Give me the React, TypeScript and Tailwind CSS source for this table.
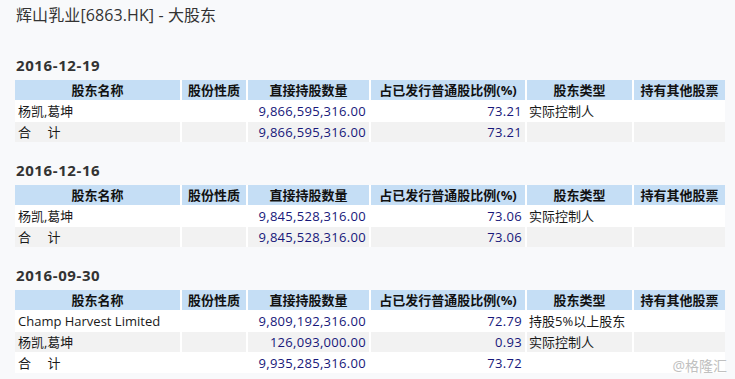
import React from "react";

type Row = { name: string; nature: string; qty: string; pct: string; type: string; other: string };
type Section = { date: string; rows: Row[] };

const sections: Section[] = [
  {
    date: "2016-12-19",
    rows: [
      { name: "杨凯,葛坤", nature: "", qty: "9,866,595,316.00", pct: "73.21", type: "实际控制人", other: "" },
      { name: "合　 计", nature: "", qty: "9,866,595,316.00", pct: "73.21", type: "", other: "" },
    ],
  },
  {
    date: "2016-12-16",
    rows: [
      { name: "杨凯,葛坤", nature: "", qty: "9,845,528,316.00", pct: "73.06", type: "实际控制人", other: "" },
      { name: "合　 计", nature: "", qty: "9,845,528,316.00", pct: "73.06", type: "", other: "" },
    ],
  },
  {
    date: "2016-09-30",
    rows: [
      { name: "Champ Harvest Limited", nature: "", qty: "9,809,192,316.00", pct: "72.79", type: "持股5%以上股东", other: "" },
      { name: "杨凯,葛坤", nature: "", qty: "126,093,000.00", pct: "0.93", type: "实际控制人", other: "" },
      { name: "合　 计", nature: "", qty: "9,935,285,316.00", pct: "73.72", type: "", other: "" },
    ],
  },
];

const headers = ["股东名称", "股份性质", "直接持股数量", "占已发行普通股比例(%)", "股东类型", "持有其他股票"];

function Table({ rows }: { rows: Row[] }) {
  return (
    <div className="mt-[5px] grid w-[710px] grid-cols-[165px_64px_121px_154px_105px_91px] gap-x-[2px] gap-y-[1px] bg-white">
      {headers.map((h) => (
        <div
          key={h}
          className="h-[20px] bg-[#c5def5] text-center text-[13px] font-bold leading-[20px] text-[#111]"
        >
          {h}
        </div>
      ))}
      {rows.map((r, i) => {
        const bg = i % 2 === 0 ? "bg-white" : "bg-[#f2f2f2]";
        return (
          <React.Fragment key={i}>
            <div className={`${bg} h-[20px] whitespace-pre px-[3px] text-[13px] leading-[20px] text-[#1a1a1a]`}>{r.name}</div>
            <div className={`${bg} h-[20px] px-[3px] text-[13px] leading-[20px] text-[#1a1a1a]`}>{r.nature}</div>
            <div className={`${bg} h-[20px] px-[3px] text-right text-[13px] leading-[20px] tracking-[0.3px] text-[#17177a]`}>{r.qty}</div>
            <div className={`${bg} h-[20px] px-[3px] text-right text-[13px] leading-[20px] tracking-[0.3px] text-[#17177a]`}>{r.pct}</div>
            <div className={`${bg} h-[20px] px-[2px] text-[13px] leading-[20px] text-[#1a1a1a]`}>{r.type}</div>
            <div className={`${bg} h-[20px] px-[3px] text-[13px] leading-[20px] text-[#1a1a1a]`}>{r.other}</div>
          </React.Fragment>
        );
      })}
    </div>
  );
}

export default function App() {
  return (
    <div
      className="relative h-[379px] w-[735px] overflow-hidden bg-[#f8f9fb] pl-[15px]"
      style={{ fontFamily: '"Open Sans", "Noto Sans CJK SC", sans-serif' }}
    >
      <div className="pt-[3px] pl-[1px] text-[16px] leading-[24px] tracking-[0.1px] text-[#333]">辉山乳业[6863.HK] - 大股东</div>
      <div className="mt-[28px] flex flex-col gap-[18px]">
        {sections.map((s) => (
          <div key={s.date}>
            <div className="h-[20px] pl-[1px] text-[15px] font-bold leading-[20px] tracking-[0.6px] text-[#333]">
              {s.date}
            </div>
            <Table rows={s.rows} />
          </div>
        ))}
      </div>
      <div className="absolute right-[8px] top-[357px] text-[14px] leading-[18px] text-[#c0c0c0]">@格隆汇</div>
    </div>
  );
}
